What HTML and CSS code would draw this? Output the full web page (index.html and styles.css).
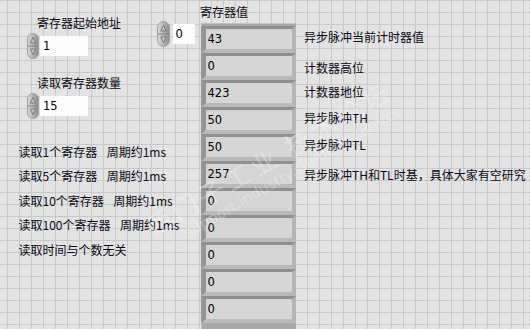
FILE: index.html
```html
<!DOCTYPE html>
<html lang="zh">
<head>
<meta charset="utf-8">
<title>寄存器读取</title>
<link rel="stylesheet" href="styles.css">
</head>
<body>
<div class="panel">
  <div class="left">
    <div class="lbl lbl-start">寄存器起始地址</div>
    <div class="num num-start">
      <svg class="spin" width="12" height="26" viewBox="0 0 12 26"><defs><linearGradient id="g1" x1="0" x2="1" y1="0" y2="0"><stop offset="0" stop-color="#dcdcdc"/><stop offset="1" stop-color="#8c8c8c"/></linearGradient></defs><rect x="0.5" y="0.5" width="11" height="25" rx="5.5" fill="url(#g1)" stroke="#a0a0a0"/><line x1="1" y1="13" x2="11" y2="13" stroke="#7c7c7c"/><path d="M6 4.5 L8.8 10 H3.2 Z" fill="#c4c4c4" stroke="#6a6a6a" stroke-width="0.8"/><path d="M6 21.5 L8.8 16 H3.2 Z" fill="#c4c4c4" stroke="#6a6a6a" stroke-width="0.8"/></svg>
      <div class="box">1</div>
    </div>
    <div class="lbl lbl-count">读取寄存器数量</div>
    <div class="num num-count">
      <svg class="spin" width="12" height="26" viewBox="0 0 12 26"><defs><linearGradient id="g2" x1="0" x2="1" y1="0" y2="0"><stop offset="0" stop-color="#dcdcdc"/><stop offset="1" stop-color="#8c8c8c"/></linearGradient></defs><rect x="0.5" y="0.5" width="11" height="25" rx="5.5" fill="url(#g2)" stroke="#a0a0a0"/><line x1="1" y1="13" x2="11" y2="13" stroke="#7c7c7c"/><path d="M6 4.5 L8.8 10 H3.2 Z" fill="#c4c4c4" stroke="#6a6a6a" stroke-width="0.8"/><path d="M6 21.5 L8.8 16 H3.2 Z" fill="#c4c4c4" stroke="#6a6a6a" stroke-width="0.8"/></svg>
      <div class="box">15</div>
    </div>
    <ul class="notes">
      <li>读取1个寄存器<span class="sp"></span>周期约1ms</li>
      <li>读取5个寄存器<span class="sp"></span>周期约1ms</li>
      <li>读取10个寄存器<span class="sp"></span>周期约1ms</li>
      <li>读取100个寄存器<span class="sp"></span>周期约1ms</li>
      <li>读取时间与个数无关</li>
    </ul>
  </div>

  <div class="idx">
    <div class="num num-idx">
      <svg class="spin" width="13" height="26" viewBox="0 0 13 26"><defs><linearGradient id="g3" x1="0" x2="1" y1="0" y2="0"><stop offset="0" stop-color="#dcdcdc"/><stop offset="1" stop-color="#8c8c8c"/></linearGradient></defs><rect x="0.5" y="0.5" width="12" height="25" rx="6" fill="url(#g3)" stroke="#a0a0a0"/><line x1="1" y1="13" x2="12" y2="13" stroke="#7c7c7c"/><path d="M6.5 4.5 L9.3 10 H3.7 Z" fill="#c4c4c4" stroke="#6a6a6a" stroke-width="0.8"/><path d="M6.5 21.5 L9.3 16 H3.7 Z" fill="#c4c4c4" stroke="#6a6a6a" stroke-width="0.8"/></svg>
      <div class="box box-idx">0</div>
    </div>
  </div>

  <div class="arr">
    <div class="arr-lbl">寄存器值</div>
    <div class="frame">
      <div class="el"><span class="val">43</span></div>
      <div class="el"><span class="val">0</span></div>
      <div class="el"><span class="val">423</span></div>
      <div class="el"><span class="val">50</span></div>
      <div class="el"><span class="val">50</span></div>
      <div class="el"><span class="val">257</span></div>
      <div class="el"><span class="val">0</span></div>
      <div class="el"><span class="val">0</span></div>
      <div class="el"><span class="val">0</span></div>
      <div class="el"><span class="val">0</span></div>
      <div class="el"><span class="val">0</span></div>
    </div>
  </div>

  <div class="desc">
    <div class="d d1">异步脉冲当前计时器值</div>
    <div class="d d2">计数器高位</div>
    <div class="d d3">计数器地位</div>
    <div class="d d4">异步脉冲TH</div>
    <div class="d d5">异步脉冲TL</div>
    <div class="d d6">异步脉冲TH和TL时基，具体大家有空研究</div>
  </div>
</div>

<div class="wm">
  <div class="wm-big">西门子工业 技术论坛</div>
  <div class="wm-small">support.industry.siemens.com/cs</div>
</div>
</body>
</html>
```

FILE: styles.css
```css
html, body {
  margin: 0;
  padding: 0;
}

body {
  width: 530px;
  height: 329px;
  overflow: hidden;
  position: relative;
  background-color: #e3e3e3;
  background-image:
    linear-gradient(to right, #c9c9c9 1px, transparent 1px),
    linear-gradient(to bottom, #c9c9c9 1px, transparent 1px);
  background-size: 12px 12px;
  background-position: 7px 0;
  font-family: "Noto Sans CJK SC", sans-serif;
  font-size: 12px;
  color: #0a0a14;
}

.panel {
  display: flex;
  height: 329px;
}

/* left column */
.left {
  width: 157px;
  flex: none;
  white-space: nowrap;
}

.lbl {
  line-height: 14px;
  padding-left: 37px;
}

.lbl-start {
  padding-top: 16px;
}

.lbl-count {
  margin-top: 17px;
}

.num {
  display: flex;
  align-items: center;
  height: 26px;
}

.num-start,
.num-count {
  padding-left: 27px;
  margin-top: 3px;
  gap: 1px;
}

.spin {
  display: block;
  flex: none;
}

.box {
  width: 48px;
  height: 20px;
  box-sizing: border-box;
  background: #fcfcfc;
  padding-left: 3px;
  font-family: "DejaVu Sans", sans-serif;
  font-size: 11.5px;
  line-height: 20px;
  color: #000;
}

.notes {
  list-style: none;
  margin: 20.5px 0 0 0;
  padding: 0 0 0 18.5px;
}

.notes li {
  line-height: 24.5px;
}

.sp {
  display: inline-block;
  width: 9.5px;
}

/* index column */
.idx {
  width: 43px;
  flex: none;
  padding-top: 21px;
}

.num-idx {
  gap: 3px;
}

.box-idx {
  width: 22px;
  padding-left: 2.5px;
}

/* array */
.arr {
  width: 104px;
  flex: none;
}

.arr-lbl {
  line-height: 14px;
  padding-top: 5px;
}

.frame {
  margin-top: 4px;
  margin-left: 1px;
  width: 95px;
  padding: 3px 0 6px 0;
  background: #a9a9a9;
  box-shadow: inset 1px 1px 0 #c2c2c2;
}

.el {
  height: 20px;
  border-style: solid;
  border-width: 3px 4px 4px 5px;
  border-color: #8f8f8f #b4b4b4 #bababa #959595;
  background: #d5d5d5;
}

.val {
  display: block;
  padding-left: 1.5px;
  font-family: "DejaVu Sans", sans-serif;
  font-size: 11.5px;
  line-height: 20px;
  color: #000;
}

/* descriptions */
.desc {
  flex: none;
  white-space: nowrap;
  padding-top: 29.5px;
}

.d {
  line-height: 14px;
}

.d2 { margin-top: 17px; }
.d3 { margin-top: 10px; }
.d4 { margin-top: 12.5px; }
.d5 { margin-top: 12.5px; }
.d6 { margin-top: 16.5px; }

/* watermark overlay */
.wm {
  position: absolute;
  left: 140px;
  top: 215px;
  transform: rotate(-30deg);
  transform-origin: left top;
  color: rgba(255, 255, 255, 0.3);
  white-space: nowrap;
  pointer-events: none;
}

.wm-big {
  font-size: 26px;
  line-height: 30px;
  letter-spacing: 4px;
}

.wm-small {
  font-family: "DejaVu Sans", sans-serif;
  font-size: 15px;
  line-height: 18px;
  padding-left: 30px;
}
```
